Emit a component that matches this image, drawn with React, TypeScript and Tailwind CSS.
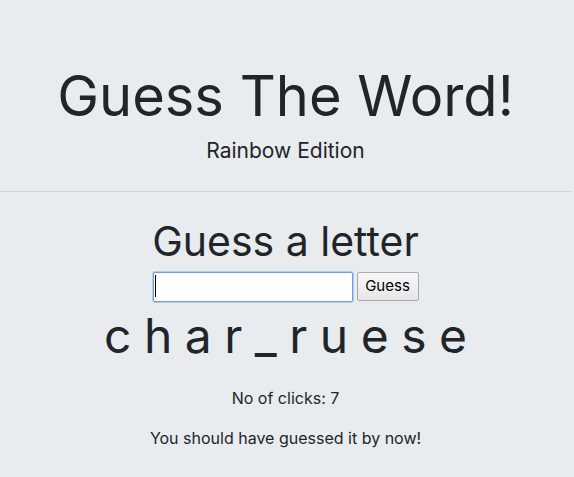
import React from "react";

export default function App() {
    const word = "c h a r _ r u e s e";

    return (
        <div className="min-h-[477px] pr-[3px] bg-[#e9ecef] text-[#212529] font-['Inter','Noto_Sans',sans-serif]">
            <header className="pt-[63px] pb-[25px] border-b border-black/10 text-center">
                <h1 className="text-[56px] leading-[67px] font-normal">Guess The Word!</h1>
                <p className="mt-[6px] text-[21px] leading-[30px]">Rainbow Edition</p>
            </header>

            <main className="flex flex-col items-center text-center">
                <h2 className="mt-[25px] text-[41px] leading-[48px] font-normal">Guess a letter</h2>

                <div className="mt-[7px] flex items-start gap-[4px]">
                    <div className="relative">
                        <input
                            type="text"
                            className="block w-[200px] h-[30px] bg-white border border-[#6e9de0] ring-1 ring-[#b3cdf1] rounded-[2px] outline-none px-1"
                        />
                        <span className="absolute left-[2px] top-[3px] w-px h-[22px] bg-black"/>
                    </div>
                    <button
                        className="w-[62px] h-[29px] rounded-[2px] border border-[#a9a9a9] bg-gradient-to-b from-[#f8f8f8] to-[#e6e6e6] text-[15px] text-black"
                    >
                        Guess
                    </button>
                </div>

                <div className="mt-[5px] text-[48px] leading-[58px] whitespace-pre [word-spacing:-1px]">{word}</div>

                <p className="mt-[21px] text-[16px] leading-6">No of clicks: 7</p>
                <p className="mt-4 text-[16px] leading-6">You should have guessed it by now!</p>
            </main>
        </div>
    );
}
